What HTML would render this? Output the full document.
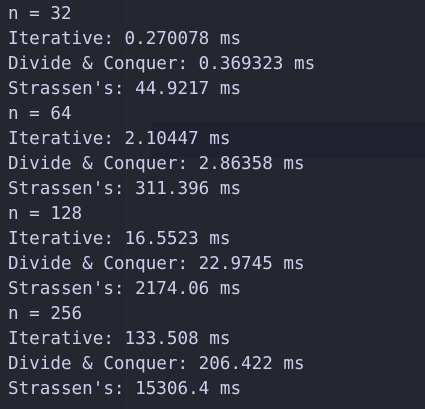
<html><head><style>
body{margin:0;width:425px;height:409px;background:#262631;overflow:hidden;position:relative}
pre{position:absolute;left:8px;top:2px;margin:0;font-family:"DejaVu Sans Mono","Liberation Mono",monospace;font-size:17.6px;line-height:25px;color:#cbcfeb;letter-spacing:0px}
.b{position:absolute;left:151px;top:122px;width:274px;height:36px;background:#20222f}
.v{position:absolute;left:126px;top:0;width:1px;height:409px;background:#2a2a35}
</style></head><body>
<div class="v"></div><div class="b"></div>
<pre>n = 32
Iterative: 0.270078 ms
Divide &amp; Conquer: 0.369323 ms
Strassen's: 44.9217 ms
n = 64
Iterative: 2.10447 ms
Divide &amp; Conquer: 2.86358 ms
Strassen's: 311.396 ms
n = 128
Iterative: 16.5523 ms
Divide &amp; Conquer: 22.9745 ms
Strassen's: 2174.06 ms
n = 256
Iterative: 133.508 ms
Divide &amp; Conquer: 206.422 ms
Strassen's: 15306.4 ms</pre>
</body></html>
